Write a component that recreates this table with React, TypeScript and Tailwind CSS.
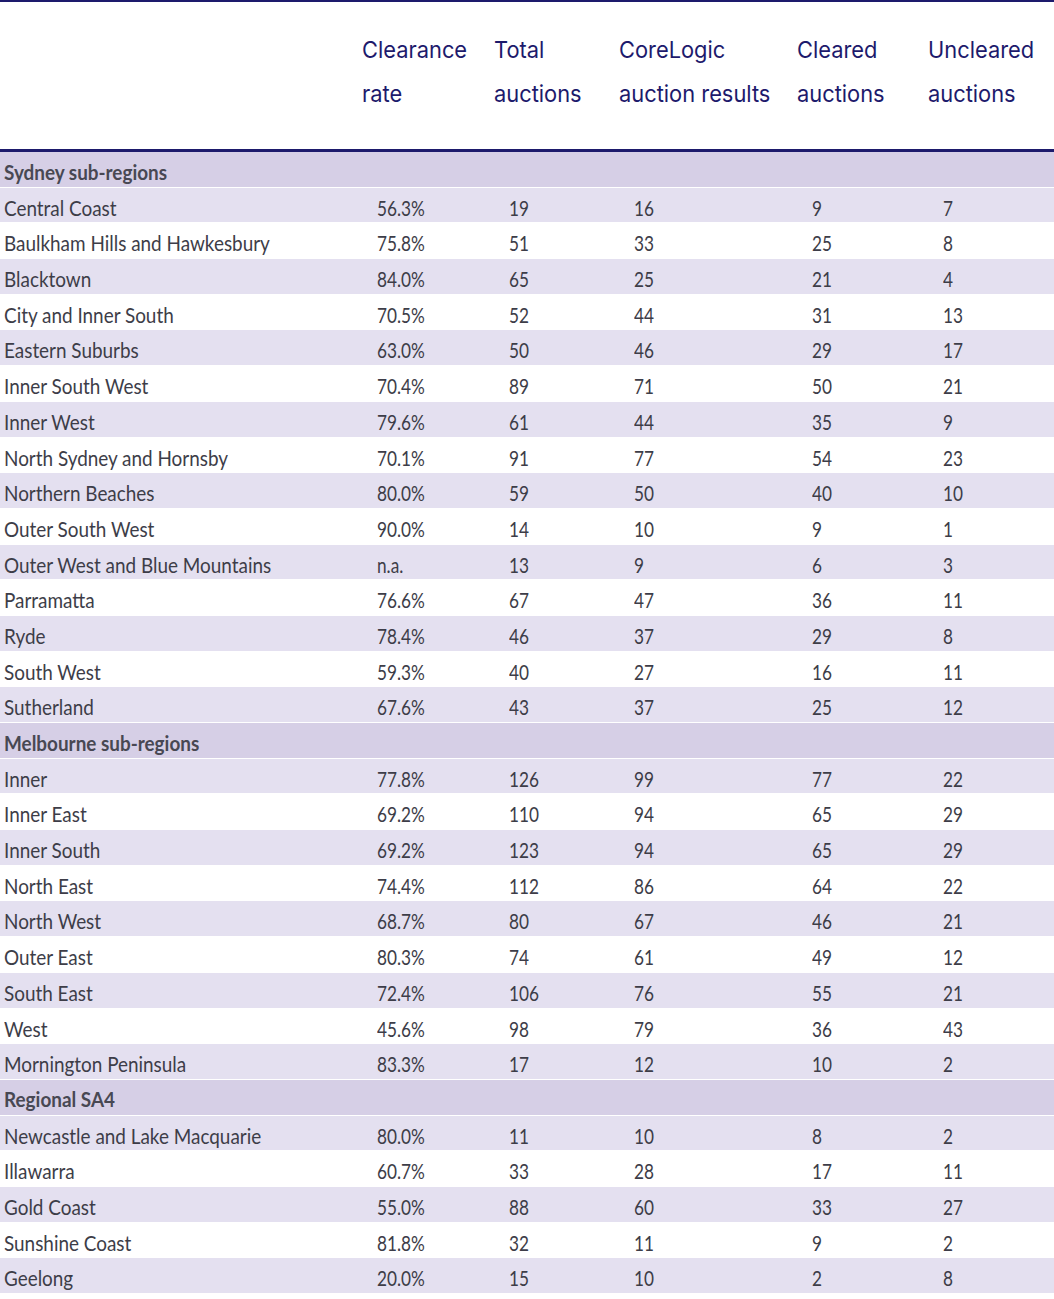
import React from 'react';

type DataRow = { name: string; rate: string; total: number; results: number; cleared: number; uncleared: number };
type Section = { title: string; rows: DataRow[] };

const r = (name: string, rate: string, total: number, results: number, cleared: number, uncleared: number): DataRow => ({
    name, rate, total, results, cleared, uncleared,
});

const sections: Section[] = [
    {
        title: 'Sydney sub-regions',
        rows: [
            r('Central Coast', '56.3%', 19, 16, 9, 7),
            r('Baulkham Hills and Hawkesbury', '75.8%', 51, 33, 25, 8),
            r('Blacktown', '84.0%', 65, 25, 21, 4),
            r('City and Inner South', '70.5%', 52, 44, 31, 13),
            r('Eastern Suburbs', '63.0%', 50, 46, 29, 17),
            r('Inner South West', '70.4%', 89, 71, 50, 21),
            r('Inner West', '79.6%', 61, 44, 35, 9),
            r('North Sydney and Hornsby', '70.1%', 91, 77, 54, 23),
            r('Northern Beaches', '80.0%', 59, 50, 40, 10),
            r('Outer South West', '90.0%', 14, 10, 9, 1),
            r('Outer West and Blue Mountains', 'n.a.', 13, 9, 6, 3),
            r('Parramatta', '76.6%', 67, 47, 36, 11),
            r('Ryde', '78.4%', 46, 37, 29, 8),
            r('South West', '59.3%', 40, 27, 16, 11),
            r('Sutherland', '67.6%', 43, 37, 25, 12),
        ],
    },
    {
        title: 'Melbourne sub-regions',
        rows: [
            r('Inner', '77.8%', 126, 99, 77, 22),
            r('Inner East', '69.2%', 110, 94, 65, 29),
            r('Inner South', '69.2%', 123, 94, 65, 29),
            r('North East', '74.4%', 112, 86, 64, 22),
            r('North West', '68.7%', 80, 67, 46, 21),
            r('Outer East', '80.3%', 74, 61, 49, 12),
            r('South East', '72.4%', 106, 76, 55, 21),
            r('West', '45.6%', 98, 79, 36, 43),
            r('Mornington Peninsula', '83.3%', 17, 12, 10, 2),
        ],
    },
    {
        title: 'Regional SA4',
        rows: [
            r('Newcastle and Lake Macquarie', '80.0%', 11, 10, 8, 2),
            r('Illawarra', '60.7%', 33, 28, 17, 11),
            r('Gold Coast', '55.0%', 88, 60, 33, 27),
            r('Sunshine Coast', '81.8%', 32, 11, 9, 2),
            r('Geelong', '20.0%', 15, 10, 2, 8),
        ],
    },
];

const headers = [
    ['Clearance', 'rate'],
    ['Total', 'auctions'],
    ['CoreLogic', 'auction results'],
    ['Cleared', 'auctions'],
    ['Uncleared', 'auctions'],
];

const grid = 'grid grid-cols-[362px_132px_125px_178px_131px_1fr]';

function Txt({ children }: { children: React.ReactNode }) {
    return <span className="inline-block origin-left scale-x-[0.9] whitespace-nowrap">{children}</span>;
}

function Num({ children }: { children: React.ReactNode }) {
    return (
        <div className="pl-[15px]">
            <span className="inline-block origin-left scale-x-[0.82] whitespace-nowrap">{children}</span>
        </div>
    );
}

export default function App() {
    return (
        <div className="w-[1054px] bg-white">
            <div className={`${grid} h-[152px] border-t-2 border-b-[3px] border-[#1d1a6c] pt-[27px]`} style={{ fontFamily: 'Inter, "Liberation Sans", sans-serif' }}>
                <div />
                {headers.map((h) => (
                    <div key={h[0]} className="text-[23px] leading-[43.5px] text-[#1d1a6c]">
                        <div><span className="inline-block origin-left scale-x-[0.95] whitespace-nowrap">{h[0]}</span></div>
                        <div><span className="inline-block origin-left scale-x-[0.95] whitespace-nowrap">{h[1]}</span></div>
                    </div>
                ))}
            </div>
            <div className="text-[21px] text-[#3d3d48]" style={{ fontFamily: 'Lato, "Open Sans", sans-serif' }}>
                {sections.map((s) => (
                    <div key={s.title}>
                        <div className="flex h-[35.7px] items-center border-b border-white bg-[#d6cfe6] pt-[4px] pl-[4px] font-bold text-[#484853]">
                            <Txt>{s.title}</Txt>
                        </div>
                        {s.rows.map((row, i) => (
                            <div
                                key={row.name}
                                className={`${grid} h-[35.7px] items-center border-b border-white pt-[4px] ${i % 2 === 0 ? 'bg-[#e4e0f0]' : 'bg-white'}`}
                            >
                                <div className="pl-[4px]"><Txt>{row.name}</Txt></div>
                                <Num>{row.rate}</Num>
                                <Num>{row.total}</Num>
                                <Num>{row.results}</Num>
                                <Num>{row.cleared}</Num>
                                <Num>{row.uncleared}</Num>
                            </div>
                        ))}
                    </div>
                ))}
            </div>
        </div>
    );
}
